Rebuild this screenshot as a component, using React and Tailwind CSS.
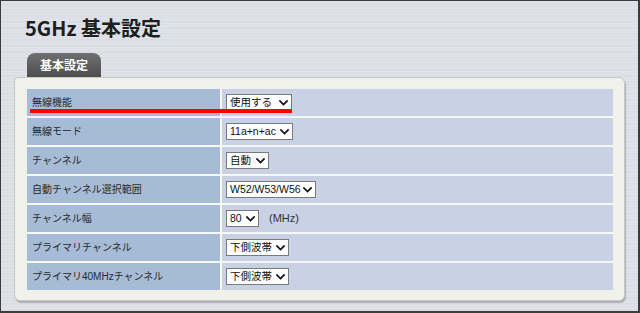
import React from "react";

const Chevron = () => (
  <svg width="9" height="6" viewBox="0 0 9 6" className="shrink-0">
    <path d="M1 1 L4.5 4.6 L8 1" fill="none" stroke="#111" strokeWidth="1.7" strokeLinecap="square" />
  </svg>
);

const Sel = ({ text, w }) => (
  <div
    className={`flex h-[17px] items-center justify-between border border-[#7a7a7a] bg-white pl-[3px] pr-[3px] text-[10.5px] leading-none text-[#111] ${w}`}
  >
    <span className="whitespace-nowrap">{text}</span>
    <Chevron />
  </div>
);

const rows = [
  { label: "無線機能", value: <Sel text="使用する" w="w-[66px]" /> },
  { label: "無線モード", value: <Sel text="11a+n+ac" w="w-[67px]" /> },
  { label: "チャンネル", value: <Sel text="自動" w="w-[43px]" /> },
  { label: "自動チャンネル選択範囲", value: <Sel text="W52/W53/W56" w="w-[90px]" /> },
  {
    label: "チャンネル幅",
    value: (
      <div className="flex items-center gap-[10px]">
        <Sel text="80" w="w-[33px]" />
        <span className="text-[11px] text-[#333]">(MHz)</span>
      </div>
    ),
  },
  { label: "プライマリチャンネル", value: <Sel text="下側波帯" w="w-[63px]" /> },
  { label: "プライマリ40MHzチャンネル", value: <Sel text="下側波帯" w="w-[63px]" /> },
];

export default function App() {
  return (
    <div
      className="relative h-[313px] w-[640px] overflow-hidden border-l border-t border-r-2 border-b-2 border-[#3c3c3c] bg-[#dcdfe5] bg-[repeating-linear-gradient(180deg,#dfe2e8_0px,#dfe2e8_2px,#d4d8df_3px,#e1e4e9_4px,#dadde3_6px)]"
      style={{ fontFamily: '"Liberation Sans", "Noto Sans CJK JP", sans-serif' }}
    >
      <div className="pl-[24px] pt-[15px]">
        <h1
          className="text-[20px] font-bold leading-[24px] text-[#1e1e1e]"
          style={{ fontFamily: '"Noto Sans CJK JP", "Noto Sans", sans-serif' }}
        >
          5GHz 基本設定
        </h1>
      </div>

      <div className="ml-[13px] mt-[13px]">
        <div
          className="ml-[13px] flex h-[24px] w-[74px] items-center justify-center rounded-t-[8px] bg-gradient-to-b from-[#707070] to-[#4e4e4e] text-[12px] font-bold text-white"
          style={{ fontFamily: '"Noto Sans CJK JP", sans-serif' }}
        >
          基本設定
        </div>
        <div className="w-[611px] rounded-[6px] rounded-tl-[4px] border border-[#c9c9c4] bg-[#f1f1ec] pb-[10px] pl-[12px] pr-[11px] pt-[11px] shadow-[1px_2px_1px_rgba(0,0,0,0.22)]">
          <div className="flex flex-col gap-[2px] bg-[#f7f7f5]">
            {rows.map((r, i) => (
              <div key={i} className="flex h-[27px] gap-[2px]">
                <div className="flex w-[193px] items-center bg-[#a6bbd6] pl-[5px] text-[10px] text-[#2a2a2a]">
                  {r.label}
                </div>
                <div className="flex flex-1 items-center bg-[#c9d1e4] pl-[4px]">{r.value}</div>
              </div>
            ))}
          </div>
        </div>
      </div>

      <div className="absolute left-[29px] top-[108px] h-[4px] w-[262px] bg-[#ff0000]" />
    </div>
  );
}
